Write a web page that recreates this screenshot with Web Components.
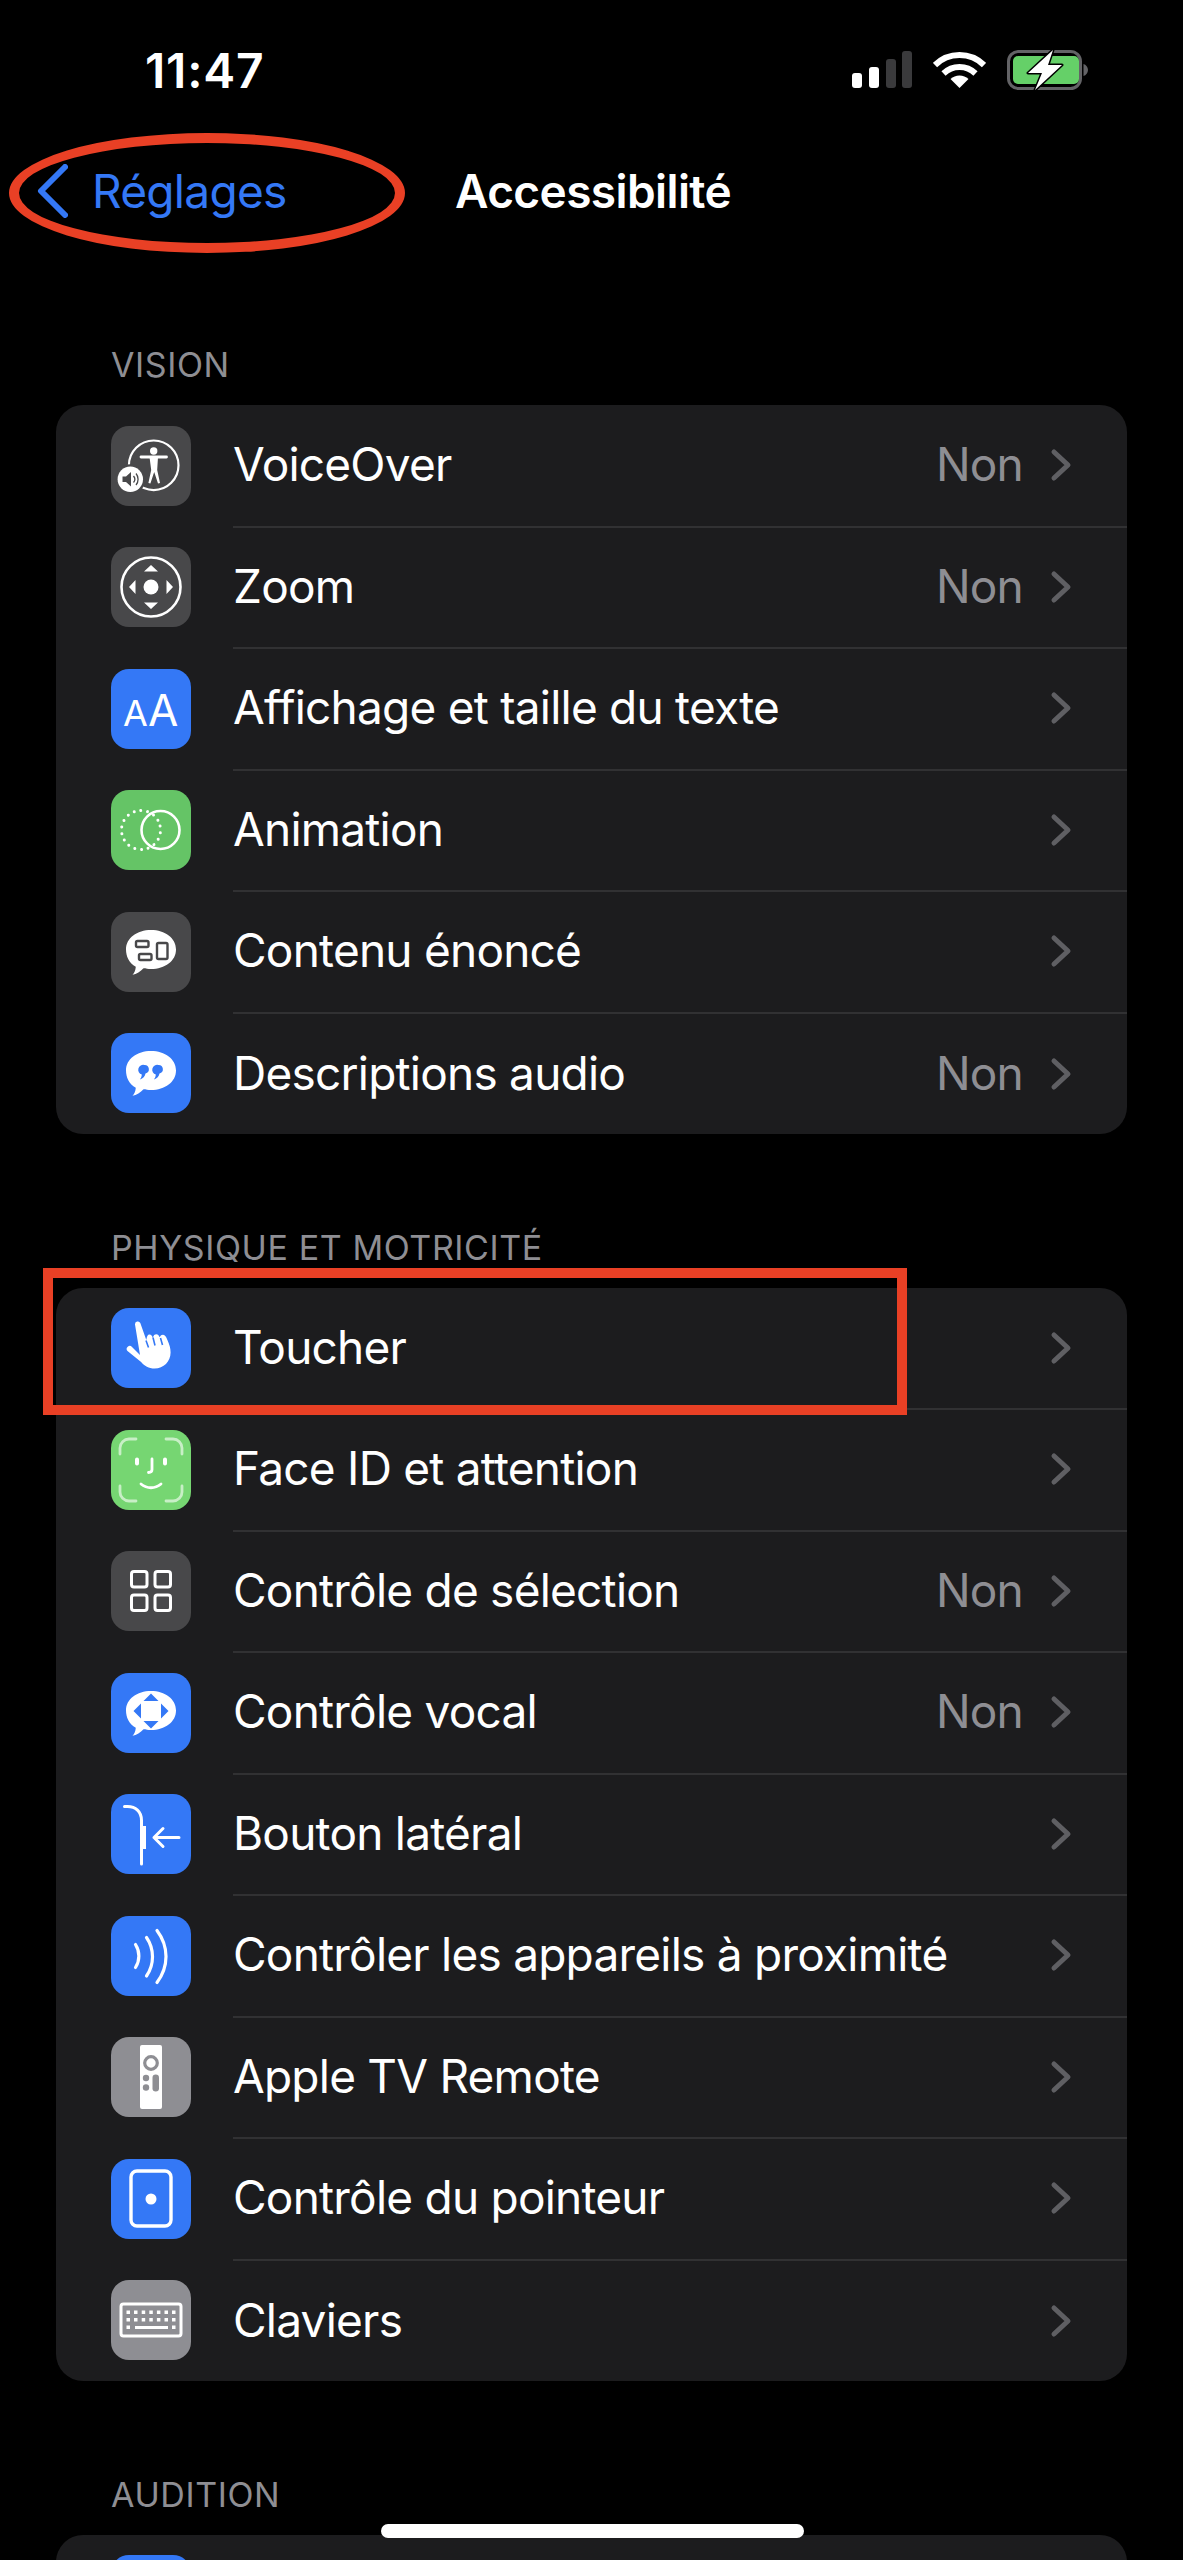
<!DOCTYPE html>
<html lang="fr">
<head>
<meta charset="utf-8">
<title>Accessibilité</title>
<style>
  html, body { margin: 0; background: #000; }
  body { width: 1183px; height: 2560px; overflow: hidden; position: relative; font-family: Inter, "Liberation Sans", sans-serif; color: #fff; }
</style>
</head>
<body>
<status-bar></status-bar>
<nav-bar back="Réglages" title="Accessibilité"></nav-bar>

<settings-section label="VISION">
  <settings-row icon="voiceover" tint="#48484a" text="VoiceOver" value="Non"></settings-row>
  <settings-row icon="zoom" tint="#48484a" text="Zoom" value="Non"></settings-row>
  <settings-row icon="text" tint="#3478f6" text="Affichage et taille du texte"></settings-row>
  <settings-row icon="animation" tint="#65c466" text="Animation"></settings-row>
  <settings-row icon="spoken" tint="#48484a" text="Contenu énoncé"></settings-row>
  <settings-row icon="audio" tint="#3478f6" text="Descriptions audio" value="Non"></settings-row>
</settings-section>

<settings-section label="PHYSIQUE ET MOTRICITÉ">
  <settings-row icon="touch" tint="#3478f6" text="Toucher"></settings-row>
  <settings-row icon="face" tint="#76d672" text="Face ID et attention"></settings-row>
  <settings-row icon="switch" tint="#48484a" text="Contrôle de sélection" value="Non"></settings-row>
  <settings-row icon="voice" tint="#3478f6" text="Contrôle vocal" value="Non"></settings-row>
  <settings-row icon="side" tint="#3478f6" text="Bouton latéral"></settings-row>
  <settings-row icon="nearby" tint="#3478f6" text="Contrôler les appareils à proximité"></settings-row>
  <settings-row icon="remote" tint="#8e8e93" text="Apple TV Remote"></settings-row>
  <settings-row icon="pointer" tint="#3478f6" text="Contrôle du pointeur"></settings-row>
  <settings-row icon="keyboard" tint="#8e8e93" text="Claviers"></settings-row>
</settings-section>

<settings-section label="AUDITION">
  <settings-row icon="blank" tint="#3478f6" text=""></settings-row>
</settings-section>

<home-bar></home-bar>
<red-marks></red-marks>

<script>
// La burbuja se repite en tres iconos
const BUBBLE = 'M40 18c14 0 25 8 25 19.500S54 57 40 57c-3 0-5-.200-7.500-.800-3 3-7 6-11 6.500 1.500-1.500 3-4 3.300-8C18 51 15 44.500 15 37.500 15 26 26 18 40 18z';

// Dibujos de los iconos, en una caja de 80x80
const ICONS = {
  voiceover: `
    <circle cx="42.700" cy="39.300" r="24.800" fill="none" stroke="#fff" stroke-width="2.200"/>
    <circle cx="42.700" cy="25" r="3.700" fill="#fff"/>
    <path d="M30 31h25.500" fill="none" stroke="#fff" stroke-width="2.800" stroke-linecap="round"/>
    <path d="M38.500 31h8.500l-.800 13 2.800 13-2 .500-3.800-11.500-3.800 11.500-2-.500 2.800-13z" fill="#fff"/>
    <circle cx="19.300" cy="53.300" r="15" fill="#48484a"/>
    <circle cx="19.300" cy="53.300" r="12.700" fill="#fff"/>
    <path d="M11.500 50.500h3.500l5-4.500v14.500l-5-4.500h-3.500z" fill="#48484a"/>
    <path d="M22.500 50a5 5 0 0 1 0 6.500M25 47.500a9 9 0 0 1 0 11.500" fill="none" stroke="#48484a" stroke-width="1.300"/>`,
  zoom: `
    <circle cx="40" cy="40" r="29.500" fill="none" stroke="#fff" stroke-width="2.600"/>
    <circle cx="40" cy="40" r="7.500" fill="#fff"/>
    <path d="M40 18l7 6.500H33zM40 62l7-6.500H33zM18 40l6.500-7v14zM62 40l-6.500-7v14z" fill="#fff"/>`,
  text: `
    <text x="12" y="57" font-family="Inter, sans-serif" font-size="36" fill="#fff">A</text>
    <text x="37" y="57" font-family="Inter, sans-serif" font-size="44" fill="#fff">A</text>`,
  animation: `
    <circle cx="49.500" cy="40" r="19" fill="none" stroke="#fff" stroke-width="2.600"/>
    <circle cx="30" cy="40" r="19.500" fill="none" stroke="#fff" stroke-width="3" stroke-linecap="round" stroke-dasharray="0 6.800" transform="rotate(-12 30 40)"/>`,
  spoken: `
    <path d="${BUBBLE}" fill="#fff"/>
    <g fill="none" stroke="#48484a" stroke-width="2.400">
      <rect x="25" y="29" width="12.500" height="6" rx="1.500"/>
      <rect x="28" y="42" width="12.500" height="6" rx="1.500"/>
      <rect x="46" y="31" width="10.500" height="16" rx="1.500"/>
    </g>`,
  audio: `
    <path d="${BUBBLE}" fill="#fff"/>
    <path transform="translate(0 3)" d="M33.500 29a4.300 4.300 0 0 1 1 8.500c-.500 3-2.500 5-5.500 6 1-1.500 1.700-3 1.800-5A4.500 4.500 0 0 1 33.500 29zM47.500 29a4.300 4.300 0 0 1 1 8.500c-.500 3-2.500 5-5.500 6 1-1.500 1.700-3 1.800-5A4.500 4.500 0 0 1 47.500 29z" fill="#3478f6"/>`,
  touch: `
    <path d="M24 16.500a2.800 2.800 0 0 1 5.300-1.500l6 17c.600-3 1-5.500 3.200-5.500 1.800 0 2.600 1.300 3.300 3.500.800-2.800 1.800-3.800 3.500-3.800 1.700 0 2.500 1 3.300 3 1-1.800 2-2.600 3.500-2.500 2 .200 3 2 4.300 5.300 2 4.700 3.200 8 3.200 12.500 0 9-7 16-16 16-6 0-10-2.500-13.500-6.500L16.500 43a3 3 0 0 1 4.500-4l8 8z" fill="#fff"/>
    <path d="M35 32.500l2.500 7M42 29.500l2 8M49.500 30l2 7" stroke="#3478f6" stroke-width="1.600" fill="none"/>`,
  face: `
    <g fill="none" stroke="#fff" stroke-opacity=".6" stroke-width="2.800" stroke-linecap="round">
      <path d="M9 24v-6a9 9 0 0 1 9-9h7M55 9h7a9 9 0 0 1 9 9v6M9 56v6a9 9 0 0 0 9 9h7M55 71h7a9 9 0 0 0 9-9v-6"/>
    </g>
    <g fill="none" stroke="#fff" stroke-width="4" stroke-linecap="round">
      <path d="M26 29.500v4M54 29.500v4"/>
    </g>
    <path d="M41 29v10.500c0 2-1 3-3.500 3M30 54c6 5 14 5 20 0" fill="none" stroke="#fff" stroke-width="2.800" stroke-linecap="round"/>`,
  switch: `
    <g fill="none" stroke="#fff" stroke-width="3">
      <rect x="20.500" y="20.500" width="15.500" height="15.500" rx="2.500"/>
      <rect x="44" y="20.500" width="15.500" height="15.500" rx="2.500"/>
      <rect x="20.500" y="44" width="15.500" height="15.500" rx="2.500"/>
      <rect x="44" y="44" width="15.500" height="15.500" rx="2.500"/>
    </g>`,
  voice: `
    <path d="${BUBBLE}" fill="#fff"/>
    <path d="M40 20.500l7.500 7.500h-15zM40 55.500l7.500-7.500h-15zM22.500 38l7.500-7.500v15zM57.500 38L50 30.500v15z" fill="#3478f6"/>`,
  side: `
    <path d="M13.500 12.500h3c8 0 14 5 14 14V70" fill="none" stroke="#fff" stroke-width="3" stroke-linecap="round"/>
    <rect x="30" y="32" width="5" height="23" fill="#fff"/>
    <path d="M68 43.500H43M52 34.500l-9 9 9 9" fill="none" stroke="#fff" stroke-width="3" stroke-linecap="round" stroke-linejoin="round"/>`,
  nearby: `
    <g fill="none" stroke="#fff" stroke-width="3.200" stroke-linecap="round">
      <path d="M24.500 28.500c4.500 7 4.500 16 0 23M35.500 21.500c8 11.500 8 27 0 38.500M46 14.500c12 16 12 36 0 52"/>
    </g>`,
  remote: `
    <rect x="29" y="8" width="22" height="64" rx="2" fill="#fff"/>
    <circle cx="40" cy="26" r="6.300" fill="none" stroke="#8e8e93" stroke-width="3.200"/>
    <circle cx="35" cy="41" r="3.200" fill="#8e8e93"/>
    <circle cx="35" cy="50.500" r="3.200" fill="#8e8e93"/>
    <rect x="41.500" y="37.500" width="6.500" height="17" rx="3.200" fill="#8e8e93"/>`,
  pointer: `
    <rect x="20" y="12" width="40" height="55" rx="6" fill="none" stroke="#fff" stroke-width="3.400"/>
    <circle cx="40" cy="40" r="5.500" fill="#fff"/>`,
  keyboard: `
    <rect x="10" y="24" width="60" height="32" rx="2.500" fill="none" stroke="#fff" stroke-width="3"/>
    <g fill="#fff">
      <rect x="15.500" y="30.500" width="3.500" height="3.500"/><rect x="23" y="30.500" width="3.500" height="3.500"/><rect x="30.700" y="30.500" width="3.500" height="3.500"/><rect x="38.300" y="30.500" width="3.500" height="3.500"/><rect x="45.900" y="30.500" width="3.500" height="3.500"/><rect x="53.500" y="30.500" width="3.500" height="3.500"/><rect x="61" y="30.500" width="3.500" height="3.500"/>
      <rect x="15.500" y="38" width="3.500" height="3.500"/><rect x="23" y="38" width="3.500" height="3.500"/><rect x="30.700" y="38" width="3.500" height="3.500"/><rect x="38.300" y="38" width="3.500" height="3.500"/><rect x="45.900" y="38" width="3.500" height="3.500"/><rect x="53.500" y="38" width="3.500" height="3.500"/><rect x="61" y="38" width="3.500" height="3.500"/>
      <rect x="15.500" y="45.500" width="3.500" height="3.500"/><rect x="24" y="46" width="33" height="3"/><rect x="61" y="45.500" width="3.500" height="3.500"/>
    </g>`,
  blank: ''
};

class StatusBar extends HTMLElement {
  constructor() {
    super();
    this.attachShadow({ mode: 'open' });
    this.shadowRoot.innerHTML = `
      <style>
        :host { display: flex; justify-content: space-between; align-items: flex-start; height: 133px; box-sizing: border-box; padding: 50px 95px 0 145px; }
        .time { font-size: 48px; line-height: 42px; font-weight: 600; letter-spacing: .8px; }
        .icons { display: flex; gap: 21px; align-items: flex-start; }
        svg { display: block; }
      </style>
      <div class="time">11:47</div>
      <div class="icons">
        <svg width="60" height="38" viewBox="0 0 60 38">
          <rect x="0" y="23" width="10" height="15" rx="3" fill="#fff"/>
          <rect x="17" y="17" width="10" height="21" rx="3" fill="#fff"/>
          <rect x="34" y="9" width="10" height="29" rx="3" fill="#3a3a3c"/>
          <rect x="50" y="1" width="10" height="37" rx="3" fill="#3a3a3c"/>
        </svg>
        <svg width="53" height="38" viewBox="0 0 53 38">
          <path d="M2 15a35 35 0 0 1 49 0M10.500 23.500a23 23 0 0 1 32 0" fill="none" stroke="#fff" stroke-width="6" stroke-linejoin="round"/>
          <path d="M26.500 38l-9-9a13 13 0 0 1 18 0z" fill="#fff"/>
        </svg>
        <svg width="81" height="40" viewBox="0 0 81 40">
          <rect x="1.500" y="1.500" width="72" height="37" rx="10" fill="none" stroke="#636366" stroke-width="3"/>
          <rect x="6" y="6" width="66" height="28" rx="5" fill="#65d068"/>
          <path d="M76.500 14v12c2.500-.800 4.500-3 4.500-6s-2-5.200-4.500-6z" fill="#636366"/>
          <path d="M46 0L21 23h14l-7 17 27-25H41z" fill="#fff" stroke="#000" stroke-width="3" paint-order="stroke" stroke-linejoin="round"/>
        </svg>
      </div>`;
  }
}

class NavBar extends HTMLElement {
  constructor() {
    super();
    this.attachShadow({ mode: 'open' });
    this.shadowRoot.innerHTML = `
      <style>
        :host { display: flex; align-items: center; height: 118.500px; box-sizing: border-box; padding: 0 0 2.500px 32px; }
        svg { display: block; flex: none; }
        .back { color: #3478f6; font-size: 46px; margin-left: 24px; width: 363px; letter-spacing: -.7px; }
        .title { font-size: 46px; font-weight: 600; letter-spacing: -.6px; }
      </style>
      <svg width="36" height="54" viewBox="0 0 36 54"><path d="M33 3L9 27l24 24" fill="none" stroke="#3478f6" stroke-width="6" stroke-linecap="round" stroke-linejoin="round"/></svg>
      <span class="back"></span><span class="title"></span>`;
    this.shadowRoot.querySelector('.back').textContent = this.getAttribute('back');
    this.shadowRoot.querySelector('.title').textContent = this.getAttribute('title');
  }
}

class SettingsSection extends HTMLElement {
  constructor() {
    super();
    this.attachShadow({ mode: 'open' });
    this.shadowRoot.innerHTML = `
      <style>
        :host { display: block; margin: 93.500px 56px 0; }
        .label { color: #8e8e93; font-size: 34px; line-height: 40px; padding: 0 0 20px 55px; letter-spacing: .6px; white-space: nowrap; }
        .card { background: #1c1c1e; border-radius: 27px; overflow: hidden; }
      </style>
      <div class="label"></div>
      <div class="card"><slot></slot></div>`;
    this.shadowRoot.querySelector('.label').textContent = this.getAttribute('label');
  }
}

class SettingsRow extends HTMLElement {
  constructor() {
    super();
    this.attachShadow({ mode: 'open' });
    this.shadowRoot.innerHTML = `
      <style>
        :host { display: flex; align-items: center; height: 121.500px; padding-left: 55px; }
        .icon { width: 80px; height: 80px; border-radius: 18px; flex: none; }
        .icon svg { display: block; }
        .body { flex: 1; align-self: stretch; display: flex; align-items: center; margin-left: 42px; padding-right: 55px; border-bottom: 2px solid #313133; margin-bottom: -1px; }
        :host(:last-child) .body { border-bottom: 0; }
        .text { flex: 1; font-size: 46px; letter-spacing: -.77px; white-space: nowrap; color: #fff; padding-bottom: 2px; }
        .value { font-size: 46px; letter-spacing: -.77px; color: #8e8e93; margin-right: 27px; padding-bottom: 2px; }
        .chev { display: block; flex: none; }
      </style>
      <div class="icon"></div>
      <div class="body">
        <span class="text"></span>
        <span class="value"></span>
        <svg class="chev" width="22" height="34" viewBox="0 0 22 34"><path d="M4 4l14 13L4 30" fill="none" stroke="#5f5f63" stroke-width="5" stroke-linecap="round" stroke-linejoin="round"/></svg>
      </div>`;
    const root = this.shadowRoot;
    const icon = root.querySelector('.icon');
    icon.style.background = this.getAttribute('tint');
    icon.innerHTML = `<svg width="80" height="80" viewBox="0 0 80 80">${ICONS[this.getAttribute('icon')] || ''}</svg>`;
    root.querySelector('.text').textContent = this.getAttribute('text');
    const value = this.getAttribute('value');
    if (value) root.querySelector('.value').textContent = value;
    else root.querySelector('.value').remove();
  }
}

class HomeBar extends HTMLElement {
  constructor() {
    super();
    this.attachShadow({ mode: 'open' });
    this.shadowRoot.innerHTML = `
      <style>
        :host { position: absolute; left: 381px; top: 2524px; width: 423px; height: 14px; background: #fff; border-radius: 7px; }
      </style>`;
  }
}

// Las marcas rojas van encima del contenido
class RedMarks extends HTMLElement {
  constructor() {
    super();
    this.attachShadow({ mode: 'open' });
    this.shadowRoot.innerHTML = `
      <style>
        :host { position: absolute; inset: 0; pointer-events: none; }
        .oval { position: absolute; left: 9px; top: 133px; width: 396px; height: 120px; box-sizing: border-box; border: 10px solid #e94025; border-radius: 50%; }
        .box { position: absolute; left: 43px; top: 1268px; width: 864px; height: 147px; box-sizing: border-box; border: 10px solid #e94025; }
      </style>
      <div class="oval"></div>
      <div class="box"></div>`;
  }
}

customElements.define('status-bar', StatusBar);
customElements.define('nav-bar', NavBar);
customElements.define('settings-section', SettingsSection);
customElements.define('settings-row', SettingsRow);
customElements.define('home-bar', HomeBar);
customElements.define('red-marks', RedMarks);
</script>
</body>
</html>
